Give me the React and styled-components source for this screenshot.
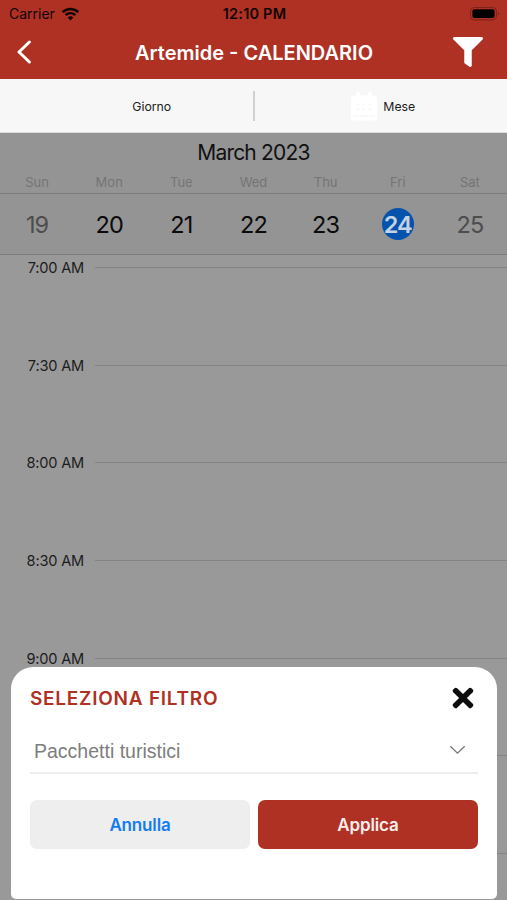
import React from "react";
import styled, { createGlobalStyle } from "styled-components";
import { FaFilter, FaTimes } from "react-icons/fa";

const days = [
  { name: "Sun", number: 19, muted: true },
  { name: "Mon", number: 20 },
  { name: "Tue", number: 21 },
  { name: "Wed", number: 22 },
  { name: "Thu", number: 23 },
  { name: "Fri", number: 24, selected: true },
  { name: "Sat", number: 25, muted: true },
];

// the last two slots start behind the sheet, only their lines show
const slots = [
  { id: 1, label: "7:00 AM" },
  { id: 2, label: "7:30 AM" },
  { id: 3, label: "8:00 AM" },
  { id: 4, label: "8:30 AM" },
  { id: 5, label: "9:00 AM" },
  { id: 6 },
  { id: 7 },
];

export default function App() {
  return (
    <Screen>
      <GlobalStyle />
      <Header>
        <StatusBar>
          <Carrier>
            <span>Carrier</span>
            <svg width="19" height="14" viewBox="0 0 18 14" fill="none">
              <path d="M1.2 5.1a11.2 11.2 0 0 1 15.6 0" stroke="#100504" strokeWidth="2.5" />
              <path d="M4.1 8.1a7 7 0 0 1 9.8 0" stroke="#100504" strokeWidth="2.3" />
              <path d="M9 13.4 6.2 10.6a4 4 0 0 1 5.6 0z" fill="#100504" />
            </svg>
          </Carrier>
          <Clock>12:10 PM</Clock>
          <Battery>
            <svg width="30" height="14" viewBox="0 0 30 14">
              <rect x="0.5" y="0.5" width="26" height="12.4" rx="3.6" fill="none" stroke="#7e2219" />
              <rect x="2.4" y="2.3" width="22.2" height="8.8" rx="2" fill="#000" />
              <path d="M28 4.6q1.6 2.1 0 4.2z" fill="#6d1e16" />
            </svg>
          </Battery>
        </StatusBar>
        <NavBar>
          <BackButton aria-label="Indietro">
            <svg width="16" height="24" viewBox="0 0 16 24" fill="none">
              <path
                d="M13.4 2 3 12l10.4 10"
                stroke="#fff"
                strokeWidth="3"
                strokeLinecap="round"
                strokeLinejoin="round"
              />
            </svg>
          </BackButton>
          <PageTitle>Artemide - CALENDARIO</PageTitle>
          <FilterButton aria-label="Filtro">
            <FaFilter size={30} />
          </FilterButton>
        </NavBar>
      </Header>

      <Tabs>
        <Tab $indent="51px">Giorno</Tab>
        <Separator />
        <Tab $indent="5px">
          <svg width="26" height="30" viewBox="0 0 26 30">
            <path
              d="M3 4.5h2V2.500q0-2 2-2t2 2v2h8V2.500q0-2 2-2t2 2v2h2q3 0 3 3V27q0 2.500-2.500 2.500h-21Q0 29.500 0 27V7.500q0-3 3-3z"
              fill="#fff"
            />
            <path
              d="M5 13.500h4M11 13.500h3M17 13.500h4M5 18.500h4M11 18.500h3M17 18.500h4M2 25h22"
              stroke="#f7f7f7"
              strokeWidth="1.6"
            />
          </svg>
          Mese
        </Tab>
      </Tabs>

      <Month>March 2023</Month>
      <WeekRow $height="23px">
        {days.map(({ name }) => (
          <DayName key={name}>{name}</DayName>
        ))}
      </WeekRow>
      <WeekRow $height="61px">
        {days.map(({ number, muted, selected }) => (
          <DayNumber key={number} $muted={muted} $selected={selected}>
            {number}
          </DayNumber>
        ))}
      </WeekRow>

      <Timeline>
        {slots.map(({ id, label }) => (
          <Slot key={id}>
            <span>{label}</span>
            <div className="line" />
          </Slot>
        ))}
      </Timeline>

      <Sheet>
        <SheetHeader>
          <h2>SELEZIONA FILTRO</h2>
          <CloseButton aria-label="Chiudi">
            <FaTimes size={30} />
          </CloseButton>
        </SheetHeader>
        <Select>
          <span>Pacchetti turistici</span>
          <svg width="17" height="14" viewBox="0 0 17 14" fill="none">
            <path d="M1.3 1.2 8.5 8.2l7.2-7" stroke="#777" strokeWidth="1.3" />
          </svg>
        </Select>
        <Actions>
          <Action>Annulla</Action>
          <Action $primary>Applica</Action>
        </Actions>
      </Sheet>
    </Screen>
  );
}

const GlobalStyle = createGlobalStyle`
  * {
    box-sizing: border-box;
    margin: 0;
    padding: 0;
  }
  body {
    font-family: Inter, "Liberation Sans", sans-serif;
    overflow: hidden;
  }
  svg {
    display: block;
  }
  button {
    border: none;
    background: none;
    font-family: inherit;
  }
`;

const Screen = styled.div`
  position: relative;
  display: flex;
  flex-direction: column;
  width: 507px;
  height: 900px;
  background: #999;
  overflow: hidden;
`;

const Header = styled.header`
  height: 79px;
  flex-shrink: 0;
  background: #ae3124;
`;

const StatusBar = styled.div`
  display: grid;
  grid-template-columns: 1fr auto 1fr;
  align-items: center;
  height: 27px;
  padding: 0 7px 0 9px;
  font-size: 14px;
  color: #100504;
`;

const Carrier = styled.div`
  display: flex;
  align-items: center;
  gap: 6px;
`;

const Clock = styled.div`
  font-size: 14.5px;
  font-weight: 600;
  letter-spacing: 0.2px;
`;

const Battery = styled.div`
  justify-self: end;
`;

const NavBar = styled.div`
  display: grid;
  grid-template-columns: 60px 1fr 60px;
  align-items: center;
  height: 50px;
  padding: 0 24px 0 16px;
`;

const BackButton = styled.button`
  justify-self: start;
`;

const PageTitle = styled.h1`
  padding: 1px 0 0 9px;
  font-size: 20px;
  font-weight: 600;
  line-height: 26px;
  text-align: center;
  white-space: nowrap;
  color: #fff;
`;

const FilterButton = styled.button`
  justify-self: end;
  color: #fff;
`;

const Tabs = styled.div`
  display: grid;
  grid-template-columns: 1fr 2px 1fr;
  align-items: center;
  height: 54px;
  flex-shrink: 0;
  background: #f7f7f7;
  border-bottom: 1px solid #dcdcdc;
`;

const Tab = styled.div`
  display: flex;
  align-items: center;
  justify-content: center;
  gap: 6px;
  padding: 1px 0 0 ${({ $indent }) => $indent};
  font-size: 12.3px;
  color: #1c1c1c;
`;

const Separator = styled.div`
  height: 30px;
  background: #d0d0d0;
`;

const Month = styled.div`
  height: 38px;
  flex-shrink: 0;
  line-height: 39px;
  font-size: 21px;
  letter-spacing: -0.8px;
  text-align: center;
  color: #111;
  background: #949494;
`;

const WeekRow = styled.div`
  display: grid;
  grid-template-columns: repeat(7, 1fr);
  place-items: center;
  height: ${({ $height }) => $height};
  flex-shrink: 0;
  padding: 0 1px;
  background: #949494;
  border-bottom: 1px solid #7c7c7c;
`;

const DayName = styled.span`
  padding-bottom: 1px;
  font-size: 13px;
  color: #747474;
`;

const DayNumber = styled.span`
  display: flex;
  align-items: center;
  justify-content: center;
  width: 32px;
  height: 32px;
  border-radius: 50%;
  font-size: 23.5px;
  letter-spacing: -0.9px;
  font-weight: ${({ $selected }) => ($selected ? 600 : 400)};
  color: ${({ $muted, $selected }) =>
    $selected ? "#c4d2e3" : $muted ? "#4d4d4d" : "#0b0b0b"};
  background: ${({ $selected }) => ($selected ? "#0553ad" : "transparent")};
`;

const Timeline = styled.div`
  display: flex;
  flex-direction: column;
  padding-top: 3px;
`;

const Slot = styled.div`
  display: flex;
  align-items: flex-start;
  gap: 11px;
  height: 97.7px;
  flex-shrink: 0;

  span {
    width: 84px;
    line-height: 20px;
    font-size: 14.6px;
    letter-spacing: -0.2px;
    text-align: right;
    color: #1c1c1c;
  }
  .line {
    flex: 1;
    height: 1px;
    margin-top: 9px;
    background: #838383;
  }
`;

const Sheet = styled.section`
  position: absolute;
  left: 11px;
  right: 10px;
  bottom: 1px;
  height: 232px;
  padding: 14px 19px 0;
  border-radius: 22px 22px 5px 5px;
  background: #fff;
`;

const SheetHeader = styled.div`
  display: flex;
  align-items: center;
  justify-content: space-between;
  height: 33px;

  h2 {
    padding-top: 1px;
    font-size: 19px;
    font-weight: 600;
    letter-spacing: 0.75px;
    color: #ae3124;
  }
`;

const CloseButton = styled.button`
  color: #0c0c0c;
`;

const Select = styled.div`
  display: flex;
  align-items: center;
  justify-content: space-between;
  height: 60px;
  padding: 17px 12px 0 4px;
  border-bottom: 2px solid #eee;
  font-family: "Liberation Sans", sans-serif;
  font-size: 19.5px;
  color: #7d7d7d;
`;

const Actions = styled.div`
  display: flex;
  gap: 8px;
  margin-top: 26px;
`;

const Action = styled.button`
  flex: 1;
  height: 49px;
  border-radius: 7px;
  font-size: 17px;
  font-weight: 600;
  letter-spacing: -0.15px;
  color: ${({ $primary }) => ($primary ? "#fbeeec" : "#127cf5")};
  background: ${({ $primary }) => ($primary ? "#ae3124" : "#eee")};
`;
